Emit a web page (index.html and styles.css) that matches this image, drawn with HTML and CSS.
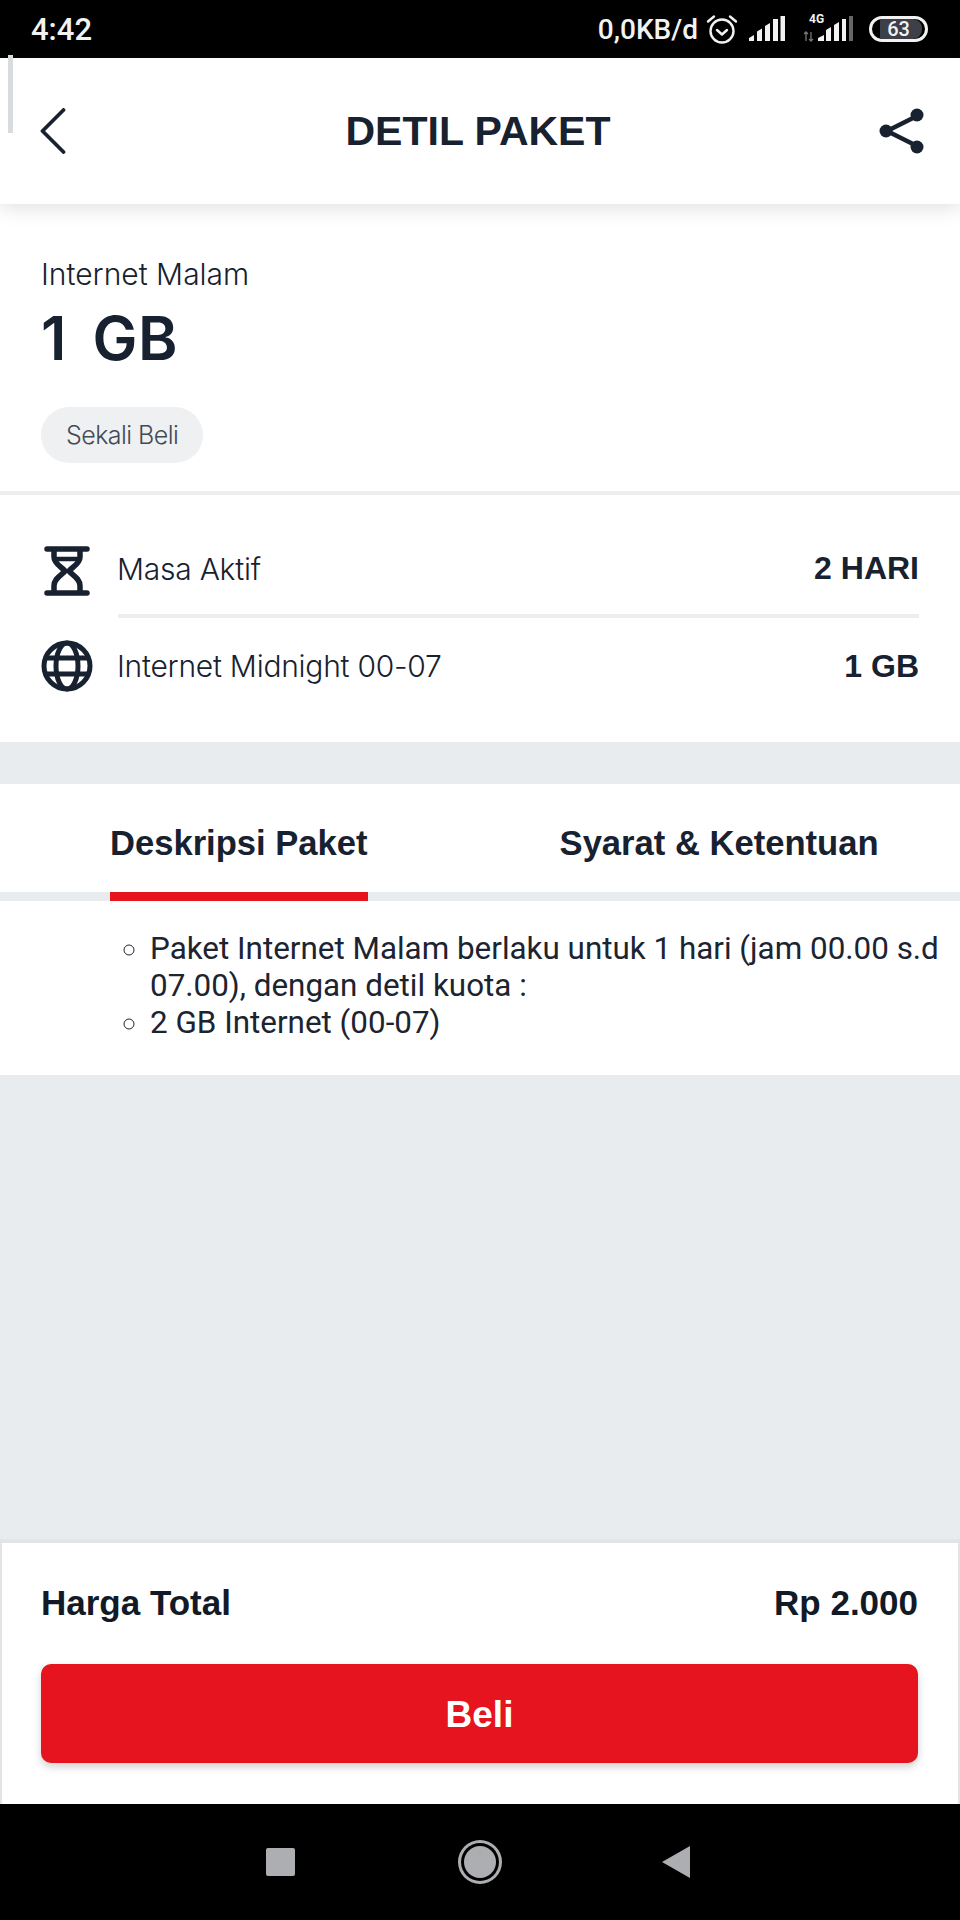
FILE: index.html
```html
<!DOCTYPE html>
<html lang="id">
<head>
    <meta charset="UTF-8">
    <meta name="viewport" content="width=device-width, initial-scale=1.0">
    <title>Detil Paket</title>
    <link rel="stylesheet" href="styles.css">
</head>
<body>
    <div class="status-bar">
        <span class="status-time">4:42</span>
        <div class="status-icons">
            <span class="status-speed">0,0KB/d</span>
            <svg class="icon-alarm" width="32" height="30" viewBox="0 0 32 30" fill="none" stroke="#f2f2f2" stroke-width="2.4">
                <circle cx="16" cy="17" r="11.5"/>
                <path d="M11 16l5 4.5 5-4.5" stroke-linecap="round" stroke-linejoin="round"/>
                <path d="M2 7.5 8 2.5M30 7.5 24 2.5" stroke-linecap="round"/>
            </svg>
            <svg class="icon-signal" width="36" height="26" viewBox="0 0 36 26" fill="#f2f2f2">
                <path d="M0 25v-3l5-3v6zM8 25V15.500l5-3V25zM16 25V10l5-3v18zM24 25V3h5v22z"/>
                <rect x="31.500" y="0" width="4.500" height="25"/>
            </svg>
            <div class="signal-4g">
                <span class="label-4g">4G</span>
                <svg width="50" height="26" viewBox="0 0 50 26" fill="#f2f2f2">
                    <path d="M2 25V16M0 18l2-2 2 2M7 16v9M5 23l2 2 2-2" fill="none" stroke="#777" stroke-width="1.300"/>
                    <path d="M14 25v-3l6-3v6zM22 25V14l5-3v14zM30 25V9l5-3v19zM38 25V3h4v22z"/>
                    <rect x="45" y="0" width="4" height="25" fill="#666"/>
                </svg>
            </div>
            <div class="battery">
                <span class="battery-fill"></span>
                <span class="battery-num">63</span>
            </div>
        </div>
    </div>

    <header class="top-bar">
        <span class="scroll-thumb"></span>
        <svg class="icon-back" width="27" height="46" viewBox="0 0 27 46" fill="none" stroke="#17212f" stroke-width="3.800" stroke-linecap="round" stroke-linejoin="round">
            <path d="M23.500 2 2.500 23 23.500 44"/>
        </svg>
        <h1 class="top-title">DETIL PAKET</h1>
        <svg class="icon-share" width="46" height="46" viewBox="0 0 46 46" fill="#17212f" stroke="#17212f">
            <path d="M38 8 8 23l30 15" fill="none" stroke-width="4.500"/>
            <circle cx="38" cy="7" r="6.500" stroke="none"/>
            <circle cx="7" cy="23" r="6.500" stroke="none"/>
            <circle cx="38" cy="39" r="6.500" stroke="none"/>
        </svg>
    </header>

    <main class="content">
        <section class="package-head">
            <p class="package-type">Internet Malam</p>
            <p class="package-size">1 GB</p>
            <span class="pill">Sekali Beli</span>
        </section>

        <section class="package-info">
            <div class="info-row">
                <svg class="info-icon" width="50" height="50" viewBox="0 0 50 50" fill="none" stroke="#17212f" stroke-width="5">
                    <path d="M5 3h40M5 47h40" stroke-width="5.500" stroke-linecap="round"/>
                    <path d="M12 4v7c0 7 8 10 11 14-3 4-11 7-11 15v6M38 4v7c0 7-8 10-11 14 3 4 11 7 11 15v6" stroke-width="5.500"/>
                    <path d="M13 13h24" stroke-width="4.500"/>
                </svg>
                <div class="info-body first">
                    <span class="info-label">Masa Aktif</span>
                    <span class="info-value">2 HARI</span>
                </div>
            </div>
            <div class="info-row">
                <svg class="info-icon" width="52" height="52" viewBox="0 0 52 52" fill="none" stroke="#17212f" stroke-width="5">
                    <circle cx="26" cy="26" r="23"/>
                    <ellipse cx="26" cy="26" rx="11" ry="23"/>
                    <path d="M4 18h44M4 34h44"/>
                </svg>
                <div class="info-body">
                    <span class="info-label">Internet Midnight 00-07</span>
                    <span class="info-value">1 GB</span>
                </div>
            </div>
        </section>

        <section class="detail-card">
            <nav class="tabs">
                <span class="tab active">Deskripsi Paket</span>
                <span class="tab">Syarat &amp; Ketentuan</span>
            </nav>
            <ul class="detail-list">
                <li>Paket Internet Malam berlaku untuk 1 hari (jam 00.00 s.d 07.00), dengan detil kuota :</li>
                <li>2 GB Internet (00-07)</li>
            </ul>
        </section>
    </main>

    <footer class="buy-bar">
        <div class="total-row">
            <span>Harga Total</span>
            <span>Rp 2.000</span>
        </div>
        <button class="buy-btn">Beli</button>
    </footer>

    <div class="nav-bar">
        <span class="nav-square"></span>
        <span class="nav-circle"></span>
        <svg width="28" height="32" viewBox="0 0 28 32" fill="#adaeb2">
            <path d="M28 0v32L0 16z"/>
        </svg>
    </div>
</body>
</html>
```

FILE: styles.css
```css
* {
    box-sizing: border-box;
}
html, body {
    margin: 0;
    padding: 0;
}
body {
    width: 960px;
    height: 1920px;
    display: flex;
    flex-direction: column;
    overflow: hidden;
    background-color: #e9ecef;
    font-family: 'Liberation Sans', Arial, sans-serif;
    color: #17212f;
}
p, h1 {
    margin: 0;
}

/* status bar */
.status-bar {
    height: 58px;
    flex: none;
    display: flex;
    align-items: center;
    justify-content: space-between;
    padding: 0 32px 0 31px;
    background-color: #000;
    color: #f2f2f2;
    font-family: 'Roboto', sans-serif;
    font-weight: 500;
}
.status-time {
    font-size: 31px;
}
.status-icons {
    display: flex;
    align-items: center;
}
.status-speed {
    font-size: 28px;
    margin-right: 8px;
}
.icon-signal {
    margin-left: 11px;
}
.signal-4g {
    position: relative;
    margin-left: 19px;
    display: flex;
}
.label-4g {
    position: absolute;
    top: -4px;
    left: 5px;
    font-size: 12px;
    font-weight: 700;
}
.battery {
    position: relative;
    width: 59px;
    height: 26px;
    margin-left: 15px;
    border: 3px solid #f2f2f2;
    border-radius: 13px;
    text-align: center;
    overflow: hidden;
}
.battery-fill {
    position: absolute;
    top: 0;
    bottom: 0;
    left: 8px;
    right: 3px;
    border-radius: 0 9px 9px 0;
    background-color: #3d4048;
}
.battery-num {
    position: relative;
    display: block;
    font-size: 20px;
    line-height: 20px;
}

/* header */
.top-bar {
    position: relative;
    height: 146px;
    flex: none;
    display: flex;
    align-items: center;
    justify-content: space-between;
    padding: 0 35px 0 40px;
    background-color: #fff;
    box-shadow: 0 4px 18px rgba(60, 70, 80, 0.16);
    z-index: 2;
}
.scroll-thumb {
    position: absolute;
    top: -3px;
    left: 8px;
    width: 5px;
    height: 78px;
    background-color: #d9dcdf;
}
.top-title {
    margin-left: 10px;
    font-size: 41px;
    font-weight: 700;
    line-height: 46px;
}

.content {
    flex: 1;
}

/* package head */
.package-head {
    height: 291px;
    padding: 52px 41px 0;
    background-color: #fff;
    border-bottom: 4px solid #eceef0;
}
.package-type {
    font-family: 'Inter', sans-serif;
    font-weight: 300;
    font-size: 30px;
    line-height: 36px;
}
.package-size {
    margin-top: 10px;
    font-family: 'Inter', sans-serif;
    font-weight: 600;
    font-size: 60px;
    line-height: 72px;
    letter-spacing: 0.5px;
    word-spacing: 10px;
}
.pill {
    display: inline-block;
    margin-top: 33px;
    padding: 0 25px;
    height: 56px;
    border-radius: 28px;
    background-color: #eff0f2;
    color: #414a57;
    font-family: 'Inter', sans-serif;
    font-weight: 300;
    font-size: 25px;
    letter-spacing: -0.55px;
    line-height: 56px;
}

/* package info rows */
.package-info {
    height: 247px;
    padding: 28px 41px 0 41px;
    background-color: #fff;
}
.info-row {
    display: flex;
    align-items: center;
}
.info-icon {
    flex: none;
    width: 52px;
}
.info-body {
    flex: 1;
    height: 96px;
    margin-left: 25px;
    display: flex;
    align-items: center;
    justify-content: space-between;
}
.info-body.first {
    height: 95px;
    border-bottom: 4px solid #eceef0;
}
.info-label {
    margin-left: -1px;
    font-family: 'Inter', sans-serif;
    font-weight: 300;
    font-size: 30px;
    letter-spacing: -0.25px;
}
.info-value {
    font-size: 32px;
    font-weight: 700;
}

/* tabs and description */
.detail-card {
    margin-top: 42px;
    height: 291px;
    background-color: #fff;
}
.tabs {
    height: 117px;
    display: flex;
    padding: 0 0 0 110px;
    gap: 192px;
    border-bottom: 9px solid #e9ecef;
}
.tab {
    height: 117px;
    padding-top: 39px;
    font-size: 34.6px;
    font-weight: 700;
    line-height: 40px;
}
.tab.active {
    border-bottom: 9px solid #e5141f;
}
.detail-list {
    margin: 0;
    padding: 29px 0 0 150px;
    list-style-type: circle;
    font-family: 'Roboto', sans-serif;
    font-size: 31.4px;
    line-height: 37px;
    color: #1b2430;
}

/* bottom bar */
.buy-bar {
    height: 265px;
    flex: none;
    padding: 0 40px 0 39px;
    background-color: #fff;
    border-top: 4px solid #e2e4e7;
    border-left: 2px solid #e2e4e7;
    border-right: 2px solid #e2e4e7;
}
.total-row {
    display: flex;
    justify-content: space-between;
    padding-top: 40px;
    font-size: 35px;
    font-weight: 700;
    line-height: 40px;
    color: #111a26;
}
.buy-btn {
    display: block;
    width: 877px;
    height: 99px;
    margin: 41px 0 0;
    padding-top: 3px;
    border: none;
    border-radius: 10px;
    background-color: #e5141f;
    box-shadow: 0 4px 8px rgba(0, 0, 0, 0.18);
    color: #fff;
    font-family: inherit;
    font-size: 37px;
    font-weight: 700;
}

/* nav bar */
.nav-bar {
    height: 116px;
    flex: none;
    display: flex;
    align-items: center;
    justify-content: center;
    padding-right: 4px;
    background-color: #000;
}
.nav-square {
    width: 29px;
    height: 28px;
    border-radius: 2px;
    background-color: #adaeb2;
}
.nav-circle {
    width: 32px;
    height: 32px;
    margin: 0 166px 0 169px;
    border-radius: 50%;
    background-color: #adaeb2;
    box-shadow: 0 0 0 3px #000, 0 0 0 6px #adaeb2;
}
```
